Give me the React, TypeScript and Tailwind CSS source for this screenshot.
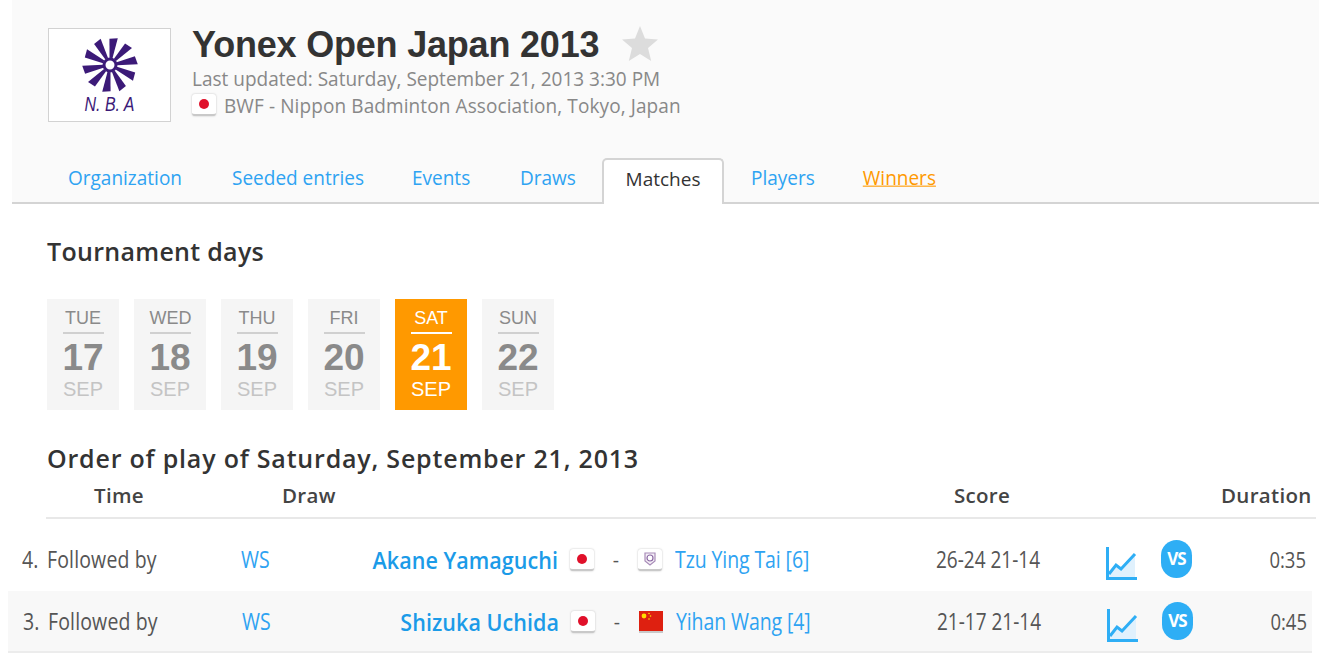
import { ReactNode } from "react";

const tabs = [
  { name: "Organization", className: "w-[164px]" },
  { name: "Seeded entries", className: "w-[180px]" },
  { name: "Events", className: "w-[108px]" },
  { name: "Draws", className: "w-[84px]" },
];

const days = [
  { day: "TUE", date: "17" },
  { day: "WED", date: "18" },
  { day: "THU", date: "19" },
  { day: "FRI", date: "20" },
  { day: "SAT", date: "21", active: true },
  { day: "SUN", date: "22" },
];

function FlagChip({ children }: { children: ReactNode }) {
  return (
    <span className="flex h-[22px] w-[24px] shrink-0 items-center justify-center overflow-hidden rounded-[3px] border-b-2 border-[#c9c9c9] bg-white shadow-[0_0_2px_#bbb]">
      {children}
    </span>
  );
}

function JapanFlag() {
  return (
    <FlagChip>
      <span className="h-[10px] w-[10px] rounded-full bg-[#e0102a]" />
    </FlagChip>
  );
}

function TaipeiFlag() {
  return (
    <FlagChip>
      <svg width="14" height="16" viewBox="0 0 14 16">
        <path d="M2 2h10v8l-5 4-5-4z" fill="#f4eef6" stroke="#a88cb8" strokeWidth="1.2" />
        <circle cx="7" cy="7" r="3" fill="#fff" stroke="#8c6aa4" strokeWidth="1.2" />
      </svg>
    </FlagChip>
  );
}

function ChinaFlag() {
  return (
    <span className="flex h-[22px] w-[24px] shrink-0 border-b-2 border-[#c9c9c9]">
      <svg width="24" height="20" viewBox="0 0 24 20">
        <rect width="24" height="20" fill="#de2010" />
        <circle cx="5" cy="5" r="2.4" fill="#ffde00" />
        <circle cx="10" cy="2.5" r="0.8" fill="#ffde00" />
        <circle cx="11.5" cy="5" r="0.8" fill="#ffde00" />
        <circle cx="10" cy="8" r="0.8" fill="#ffde00" />
      </svg>
    </span>
  );
}

function ChartIcon() {
  return (
    <svg className="mt-[6px] block" width="31" height="33" viewBox="0 0 31 33">
      <path d="M2 31V28L10 18l5 4L29 8v23z" fill="#e0f1fd" />
      <path d="M1.500 0v31.500H31" fill="none" stroke="#2eaef5" strokeWidth="3" />
      <path d="M3 27l7-9 5 4L29 7" fill="none" stroke="#2eaef5" strokeWidth="3" />
    </svg>
  );
}

function MatchRow(props: {
  num: string;
  player: string;
  opponent: string;
  flag: ReactNode;
  score: string;
  duration: string;
  shaded?: boolean;
}) {
  const rowBg = props.shaded
    ? "h-[62px] ml-[8px] w-[1304px] bg-[#f8f8f8] border-b-2 border-[#ececec] pl-[15px] pt-[2px]"
    : "h-[62px] ml-0 w-[1312px] pl-[22px]";
  return (
    <div className={`flex items-center text-[19.5px] ${rowBg}`}>
      <span className="w-[25px] shrink-0 scale-y-[1.2] text-[#555]">{props.num}</span>
      <span className="w-[194px] shrink-0 scale-y-[1.2] tracking-[0.15px] text-[#555]">Followed by</span>
      <span className="w-[60px] shrink-0 scale-y-[1.2] text-[#2ea3f2]">WS</span>
      <span className="w-[257px] shrink-0 scale-y-[1.12] text-right text-[21.5px] font-semibold tracking-[0.05px] text-[#1b9be8]">
        {props.player}
      </span>
      <span className="ml-[12px]">
        <JapanFlag />
      </span>
      <span className="w-[44px] shrink-0 text-center text-[#555]">-</span>
      {props.flag}
      <span className="ml-[13px] w-[261px] shrink-0 scale-y-[1.2] tracking-[-0.1px] text-[#2ea3f2]">
        {props.opponent}
      </span>
      <span className="w-[170px] shrink-0 scale-y-[1.2] text-[19px] text-[#555]">{props.score}</span>
      <span className="w-[55px] shrink-0">
        <ChartIcon />
      </span>
      <span className="mb-[2px] flex h-[38px] w-[31px] shrink-0 items-center justify-center rounded-full bg-[#2eaef5] text-[17px] font-bold tracking-[-1px] text-white">
        VS
      </span>
      <span className="w-[114px] shrink-0 scale-y-[1.2] text-right text-[18.5px] text-[#555]">{props.duration}</span>
    </div>
  );
}

export default function App() {
  return (
    <div className="h-[658px] w-[1338px] overflow-hidden bg-white font-['Open_Sans',sans-serif]">
      {/* Tournament header */}
      <div className="ml-[12px] h-[204px] w-[1307px] border-b-2 border-[#d4d4d4] bg-[#fafafa] pl-[36px] pt-[28px]">
        <div className="flex h-[128px] items-start">
          <div className="flex h-[94px] w-[123px] flex-col items-center border border-[#d2d2d2] bg-white pt-[7px]">
            <svg width="58" height="58" viewBox="0 0 58 58">
              {[0, 36, 72, 108, 144, 180, 216, 252, 288, 324].map((a) => (
                <path
                  key={a}
                  d="M27.500 22 L24.800 3 L33 1.500 L30.500 22 Z"
                  fill="#3c1a78"
                  transform={`rotate(${a + 8} 29 29)`}
                />
              ))}
              <circle cx="29" cy="29" r="6" fill="none" stroke="#3c1a78" strokeWidth="3" />
              <circle cx="29" cy="29" r="2" fill="#fff" />
            </svg>
            <span className="scale-y-[1.25] font-['Liberation_Sans',sans-serif] text-[16px] italic leading-[22px] text-[#3c1a78]">
              N. B. A
            </span>
          </div>
          <div className="ml-[21px]">
            <div className="flex items-center">
              <h1 className="font-['Liberation_Sans',sans-serif] text-[36px] font-bold leading-[34px] tracking-[-0.2px] text-[#333]">
                Yonex Open Japan 2013
              </h1>
              <svg className="ml-[23px] -mt-[4px]" width="36" height="35" viewBox="0 0 36 35">
                <path d="M18 0l5 12.500 13 1-10 8.500 3.200 13L18 28l-11.200 7L10 22 0 13.500l13-1z" fill="#dcdcdc" />
              </svg>
            </div>
            <p className="mt-[2px] origin-left scale-y-[1.08] text-[19px] leading-[28px] text-[#888]">
              Last updated: Saturday, September 21, 2013 3:30 PM
            </p>
            <div className="flex h-[26px] items-center text-[19px] text-[#888]">
              <JapanFlag />
              <span className="ml-[8px] scale-y-[1.08] tracking-[0.1px]">
                BWF - Nippon Badminton Association, Tokyo, Japan
              </span>
            </div>
          </div>
        </div>

        {/* Tabs */}
        <div className="flex h-[46px] items-end text-[19px]">
          <div className="flex h-[44px] items-center pb-[6px] pl-[20px] text-[#2ea3f2]">
            {tabs.map((tab) => (
              <span key={tab.name} className={`shrink-0 origin-left scale-y-[1.08] ${tab.className}`}>
                {tab.name}
              </span>
            ))}
          </div>
          <div className="-mb-[2px] ml-[-2px] flex h-[46px] w-[122px] items-center justify-center rounded-t-[5px] border-2 border-b-0 border-[#d4d4d4] bg-white pb-[5px] text-[#333]">
            Matches
          </div>
          <div className="flex h-[44px] items-center pb-[6px]">
            <span className="ml-[27px] scale-y-[1.08] text-[#2ea3f2]">Players</span>
            <span className="ml-[48px] scale-y-[1.08] text-[#ff9900] underline">Winners</span>
          </div>
        </div>
      </div>

      {/* Tournament days */}
      <h2 className="ml-[47px] mt-[30px] text-[25px] font-semibold leading-[34px] tracking-[0.3px] text-[#333]">
        Tournament days
      </h2>
      <div className="ml-[47px] mt-[31px] flex gap-[15px] font-['Liberation_Sans',sans-serif]">
        {days.map((d) => (
          <div
            key={d.day}
            className={`flex h-[111px] w-[72px] flex-col items-center pt-[7px] ${
              d.active ? "bg-[#ff9900] text-white" : "bg-[#f5f5f5] text-[#8a8a8a]"
            }`}
          >
            <span
              className={`w-[41px] border-b-2 pb-[2px] text-center text-[18px] leading-[24px] ${
                d.active ? "border-white" : "border-[#d0d0d0]"
              }`}
            >
              {d.day}
            </span>
            <span className="mt-[2px] text-[37px] font-bold leading-[44px]">{d.date}</span>
            <span className={`-mt-[2px] text-[20px] leading-[22px] ${d.active ? "text-white" : "text-[#c4c4c4]"}`}>
              SEP
            </span>
          </div>
        ))}
      </div>

      {/* Order of play */}
      <h2 className="ml-[47px] mt-[31px] text-[25px] font-semibold leading-[34px] tracking-[0.8px] text-[#333]">
        Order of play of Saturday, September 21, 2013
      </h2>
      <div className="ml-[46px] flex h-[44px] w-[1270px] items-center border-b-2 border-[#e8e8e8] pb-[2px] text-[20.5px] font-semibold tracking-[0.3px] text-[#444]">
        <span className="ml-[48px] w-[188px]">Time</span>
        <span className="w-[672px]">Draw</span>
        <span className="w-[267px]">Score</span>
        <span>Duration</span>
      </div>
      <div className="pt-[10px]">
        <MatchRow
          num="4."
          player="Akane Yamaguchi"
          opponent="Tzu Ying Tai [6]"
          flag={<TaipeiFlag />}
          score="26-24 21-14"
          duration="0:35"
        />
        <MatchRow
          shaded
          num="3."
          player="Shizuka Uchida"
          opponent="Yihan Wang [4]"
          flag={<ChinaFlag />}
          score="21-17 21-14"
          duration="0:45"
        />
      </div>
    </div>
  );
}
